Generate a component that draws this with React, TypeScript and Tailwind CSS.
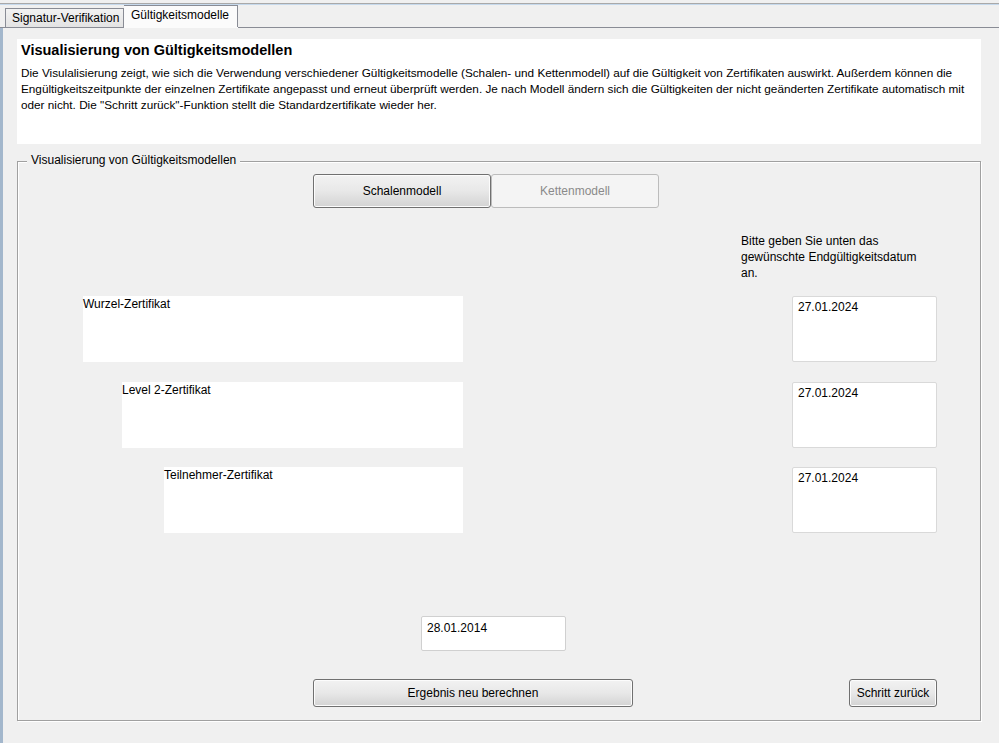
// Gültigkeitsmodelle-Tab: Erklärung, Modellauswahl und Zertifikatskette mit Enddaten.
const certs = [
  { name: 'Wurzel-Zertifikat', width: 'w-[380px]', date: '27.01.2024', gap: 'mt-[15px]' },
  { name: 'Level 2-Zertifikat', width: 'w-[341px]', date: '27.01.2024', gap: 'mt-[20px]' },
  { name: 'Teilnehmer-Zertifikat', width: 'w-[299px]', date: '27.01.2024', gap: 'mt-[19px]' },
];

function WinButton({ label, className }: { label: string; className: string }) {
  return (
    <button
      className={`flex items-center justify-center rounded-[3px] border border-[#707070] bg-linear-to-b from-[#f2f2f2] via-[#e8e8e8] to-[#d3d3d3] text-[12px] text-black shadow-[inset_0_0_0_1px_#fcfcfc] ${className}`}
    >
      {label}
    </button>
  );
}

export default function App() {
  return (
    <div className="flex h-[743px] w-[999px] flex-col overflow-hidden bg-[#f0f0f0] font-['Liberation_Sans',Arial,sans-serif] text-[12px] text-black">
      {/* Fensterkante + Tab-Leiste */}
      <div className="h-[3px]" />
      <div className="h-[1px] bg-[#a9a9a9]" />
      <div className="h-[1px] bg-[#c6d9ec]" />
      <div className="flex h-[22px] items-end pl-[5px]">
        <div className="flex h-[19px] w-[119px] items-start border border-b-0 border-[#898c95] bg-linear-to-b from-[#f2f2f2] to-[#e3e3e3] pl-[6px] pt-[1px] leading-[16px]">
          Signatur-Verifikation
        </div>
        <div className="flex h-[22px] w-[114px] items-start border border-b-0 border-l-0 border-[#898c95] bg-[#fbfbfb] pl-[7px] pt-[1px] leading-[16px]">
          Gültigkeitsmodelle
        </div>
      </div>
      <div className="flex h-[1px]">
        <div className="w-[124px] bg-[#898c95]" />
        <div className="w-[114px] bg-[#fbfbfb]" />
        <div className="flex-1 bg-[#898c95]" />
      </div>

      <div className="flex flex-1">
        <div className="w-[3px] bg-[#a3b7cc]" />
        <div className="flex flex-1 flex-col pl-[14px]">
          {/* Beschreibung */}
          <div className="mt-[11px] h-[105px] w-[964px] bg-white pl-[4px] pt-[2px]">
            <div className="text-[14.5px] font-bold leading-[18px]">Visualisierung von Gültigkeitsmodellen</div>
            <p className="mt-[6px] whitespace-nowrap text-[11.75px] leading-[16px]">
              Die Visulalisierung zeigt, wie sich die Verwendung verschiedener Gültigkeitsmodelle (Schalen- und Kettenmodell) auf die Gültigkeit von Zertifikaten auswirkt. Außerdem können die
              <br />
              Engültigkeitszeitpunkte der einzelnen Zertifikate angepasst und erneut überprüft werden. Je nach Modell ändern sich die Gültigkeiten der nicht geänderten Zertifikate automatisch mit
              <br />
              oder nicht. Die "Schritt zurück"-Funktion stellt die Standardzertifikate wieder her.
            </p>
          </div>

          {/* Gruppe */}
          <div className="relative mt-[17px] flex h-[560px] w-[964px] flex-col border border-[#a0a0a0] shadow-[inset_1px_1px_0_#ffffff,1px_1px_0_#ffffff]">
            <span className="absolute left-[9px] top-[-10px] bg-[#f0f0f0] px-[4px] leading-[16px]">
              Visualisierung von Gültigkeitsmodellen
            </span>

            <div className="ml-[295px] mt-[12px] flex h-[34px]">
              <WinButton label="Schalenmodell" className="w-[178px]" />
              <div className="flex w-[168px] items-center justify-center rounded-[3px] border border-[#bcbcbc] bg-[#f4f4f4] text-[#8a8a8a]">
                Kettenmodell
              </div>
            </div>

            <p className="ml-[723px] mt-[25px] w-[185px] leading-[16px]">
              Bitte geben Sie unten das gewünschte Endgültigkeitsdatum an.
            </p>

            {certs.map((c) => (
              <div key={c.name} className={`flex h-[66px] ${c.gap}`}>
                <div className="flex w-[445px] justify-end">
                  <div className={`h-full bg-white leading-[16px] ${c.width}`}>{c.name}</div>
                </div>
                <div className="ml-[329px] h-full w-[145px] rounded-[2px] border border-[#d9d9d9] bg-white pl-[5px] pt-[2px] leading-[16px]">
                  {c.date}
                </div>
              </div>
            ))}

            <div className="ml-[403px] mt-[83px] h-[35px] w-[145px] rounded-[2px] border border-[#d0d0d0] bg-white pl-[5px] pt-[3px] leading-[16px]">
              28.01.2014
            </div>

            <div className="mt-[28px] flex h-[28px]">
              <WinButton label="Ergebnis neu berechnen" className="ml-[295px] w-[320px]" />
              <WinButton label="Schritt zurück" className="ml-[216px] w-[88px]" />
            </div>
          </div>
        </div>
      </div>
    </div>
  );
}
